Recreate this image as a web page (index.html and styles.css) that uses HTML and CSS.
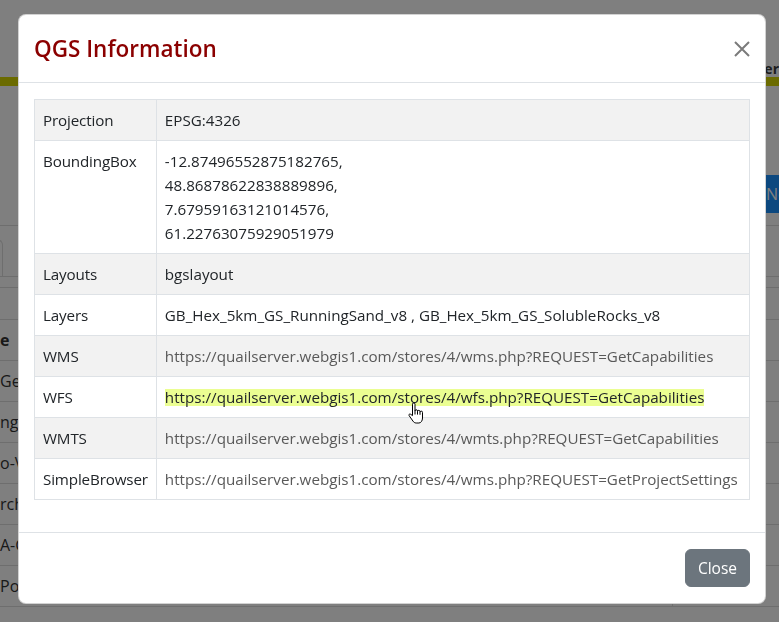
FILE: index.html
```html
<!DOCTYPE html>
<html lang="en">
<head>
<meta charset="utf-8">
<title>QGS Information</title>
<link rel="stylesheet" href="styles.css">
</head>
<body>
<div class="page">
  <header class="topbar"><span class="topbar-link">er</span></header>
  <div class="accent-bar"></div>
  <div class="toolbar"><button class="new-btn" type="button">Ne</button></div>
  <div class="tabs"><div class="tab"></div></div>
  <div class="filter-row"></div>
  <div class="filter-row2"></div>
  <table class="bg-table">
    <tr><td class="bg-name bg-head">e</td><td class="bg-mid"></td><td class="bg-end"></td></tr>
    <tr><td class="bg-name">Geo</td><td class="bg-mid"></td><td class="bg-end"></td></tr>
    <tr><td class="bg-name">ngo</td><td class="bg-mid"></td><td class="bg-end"></td></tr>
    <tr><td class="bg-name">o-V</td><td class="bg-mid"></td><td class="bg-end"></td></tr>
    <tr><td class="bg-name">rch</td><td class="bg-mid"></td><td class="bg-end"></td></tr>
    <tr><td class="bg-name">A-G</td><td class="bg-mid"></td><td class="bg-end"></td></tr>
    <tr><td class="bg-name">Pos</td><td class="bg-mid"></td><td class="bg-end"></td></tr>
  </table>
</div>
<div class="backdrop"></div>
<div class="modal">
  <div class="modal-header">
    <h4 class="modal-title">QGS Information</h4>
    <button class="btn-close" type="button" aria-label="Close">
      <svg width="16" height="16" viewBox="0 0 16 16"><path d="M1 1L15 15M15 1L1 15" stroke="#7b7b7b" stroke-width="2" fill="none"/></svg>
    </button>
  </div>
  <div class="modal-body">
    <table class="info-table">
      <tr class="odd"><td class="key">Projection</td><td class="val">EPSG:4326</td></tr>
      <tr><td class="key">BoundingBox</td><td class="val">-12.87496552875182765,<br>48.86878622838889896,<br>7.67959163121014576,<br>61.22763075929051979</td></tr>
      <tr class="odd"><td class="key">Layouts</td><td class="val">bgslayout</td></tr>
      <tr><td class="key">Layers</td><td class="val">GB_Hex_5km_GS_RunningSand_v8 , GB_Hex_5km_GS_SolubleRocks_v8</td></tr>
      <tr class="odd"><td class="key">WMS</td><td class="val"><a class="url">https://quailserver.webgis1.com/stores/4/wms.php?REQUEST=GetCapabilities</a></td></tr>
      <tr><td class="key">WFS</td><td class="val"><a class="url url-hover">https://quailserver.webgis1.com/stores/4/wfs.php?REQUEST=GetCapabilities</a></td></tr>
      <tr class="odd"><td class="key">WMTS</td><td class="val"><a class="url">https://quailserver.webgis1.com/stores/4/wmts.php?REQUEST=GetCapabilities</a></td></tr>
      <tr><td class="key">SimpleBrowser</td><td class="val"><a class="url">https://quailserver.webgis1.com/stores/4/wms.php?REQUEST=GetProjectSettings</a></td></tr>
    </table>
  </div>
  <div class="modal-footer">
    <button class="btn-secondary" type="button">Close</button>
  </div>
</div>
<svg class="cursor" width="18" height="23" viewBox="0 0 18 23">
  <path d="M5.5 2.2a1.25 1.25 0 0 1 2.5 0V9a1.25 1.25 0 0 1 2.5 0v0.6a1.25 1.25 0 0 1 2.5 0v0.8a1.25 1.25 0 0 1 2.5 0V16c0 2.8-1.6 5-3.6 5H9.2c-1.5 0-2.5-0.8-3.3-2L2.1 13.6c-0.6-0.9 0.4-2.1 1.4-1.4L5.5 13.6Z" fill="#fff" stroke="#000" stroke-width="1" stroke-linejoin="round"/>
  <path d="M8 9v3.5M10.5 9.6v3M13 10.4v2.4" stroke="#000" stroke-width="1" fill="none"/>
</svg>
</body>
</html>
```
FILE: styles.css
```css
html, body {
  margin: 0;
  padding: 0;
  overflow: hidden;
  height: 100%;
}
body {
  font-family: "Open Sans", "Noto Sans", sans-serif;
  font-size: 15.2px;
  color: #212529;
  background: #fff;
}
.page {
  width: 779px;
  height: 622px;
  overflow: hidden;
}
.topbar {
  height: 77px;
  display: flex;
  justify-content: flex-end;
  align-items: flex-end;
}
.topbar-link {
  font-weight: 700;
  font-size: 14px;
  line-height: 14px;
  color: #3a3a3a;
  margin-right: 0;
  padding-bottom: 1px;
}
.accent-bar {
  height: 9px;
  background: #d6d600;
}
.toolbar {
  padding-top: 89px;
  height: 50px;
  border-bottom: 1px solid #dcdcdc;
  padding-left: 755px;
  display: flex;
  align-items: flex-start;
}
.new-btn {
  flex: none;
  width: 40px;
  height: 38px;
  padding: 0 0 0 11px;
  text-align: left;
  border: none;
  background: #1890ff;
  color: #fff;
  font-family: inherit;
  font-size: 16px;
  white-space: nowrap;
  border-radius: 4px 0 0 4px;
}
.tabs {
  padding-top: 13px;
  border-bottom: 1px solid #dcdcdc;
  height: 37px;
  overflow: hidden;
}
.tab {
  width: 103px;
  height: 37px;
  margin-left: -100px;
  border: 1px solid #dcdcdc;
  border-bottom: none;
  border-radius: 6px 6px 0 0;
  box-sizing: border-box;
}
.filter-row {
  height: 10px;
  border-bottom: 1px solid #dcdcdc;
}
.filter-row2 {
  height: 31px;
  border-bottom: 1px solid #dcdcdc;
}
.bg-table {
  width: 779px;
  border-collapse: collapse;
}
.bg-table td {
  height: 40px;
  padding: 0;
  border-bottom: 1px solid #dcdcdc;
  color: #333;
  font-size: 16px;
}
.bg-name {
  width: 60px;
}
.bg-head {
  font-weight: 700;
}
.bg-mid {
  width: 612px;
  border-right: 1px solid #dcdcdc;
}
.backdrop {
  position: fixed;
  inset: 0;
  background: rgba(0, 0, 0, 0.5);
}
.modal {
  position: fixed;
  top: 14px;
  left: 18px;
  width: 748px;
  box-sizing: border-box;
  background: #fff;
  border: 1px solid rgba(0, 0, 0, 0.175);
  border-radius: 8px;
  display: flex;
  flex-direction: column;
}
.modal-header {
  display: flex;
  align-items: center;
  justify-content: space-between;
  padding: 16px 15px;
  border-bottom: 1px solid #dee2e6;
}
.modal-title {
  margin: 0;
  font-size: 22.5px;
  line-height: 35px;
  font-weight: 600;
  color: #8b0000;
}
.btn-close {
  width: 16px;
  height: 16px;
  padding: 0;
  border: none;
  background: none;
  display: flex;
}
.modal-body {
  padding: 16px 15px;
}
.info-table {
  width: 100%;
  border-collapse: collapse;
  border: 1px solid #dee2e6;
  margin-bottom: 16px;
}
.info-table td {
  border: 1px solid #dee2e6;
  padding: 8px;
  line-height: 24px;
  vertical-align: top;
}
.info-table tr.odd td {
  background: #f2f2f2;
}
.key {
  width: 104px;
  white-space: nowrap;
  letter-spacing: -0.15px;
}
.val {
  white-space: nowrap;
}
.url {
  color: #595959;
  text-decoration: none;
}
.url-hover {
  color: #212529;
  background: #ebfe92;
  display: inline-block;
  line-height: 17px;
  vertical-align: top;
  margin-top: 4px;
}
.modal-footer {
  display: flex;
  justify-content: flex-end;
  padding: 12px 11px 12px 12px;
  border-top: 1px solid #dee2e6;
}
.btn-secondary {
  margin: 4px;
  height: 38px;
  padding: 6px 12px;
  border: 1px solid #6c757d;
  border-radius: 6px;
  background: #6c757d;
  color: #fff;
  font-family: inherit;
  font-size: 15.5px;
  line-height: 24px;
}
.cursor {
  position: fixed;
  left: 407px;
  top: 402px;
}
```
